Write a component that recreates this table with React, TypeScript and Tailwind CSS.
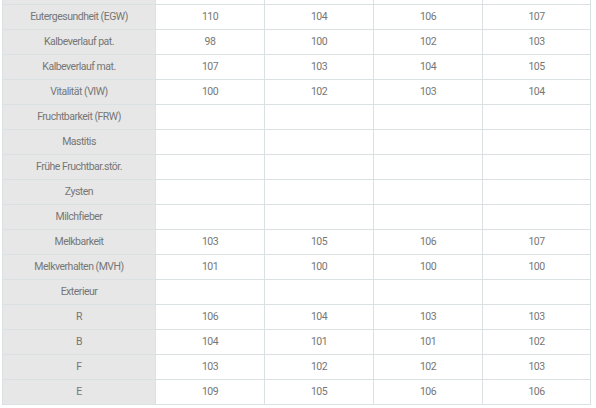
const rows: [string, string[]][] = [
  ["Eutergesundheit (EGW)", ["110", "104", "106", "107"]],
  ["Kalbeverlauf pat.", ["98", "100", "102", "103"]],
  ["Kalbeverlauf mat.", ["107", "103", "104", "105"]],
  ["Vitalität (VIW)", ["100", "102", "103", "104"]],
  ["Fruchtbarkeit (FRW)", ["", "", "", ""]],
  ["Mastitis", ["", "", "", ""]],
  ["Frühe Fruchtbar.stör.", ["", "", "", ""]],
  ["Zysten", ["", "", "", ""]],
  ["Milchfieber", ["", "", "", ""]],
  ["Melkbarkeit", ["103", "105", "106", "107"]],
  ["Melkverhalten (MVH)", ["101", "100", "100", "100"]],
  ["Exterieur", ["", "", "", ""]],
  ["R", ["106", "104", "103", "103"]],
  ["B", ["104", "101", "101", "102"]],
  ["F", ["103", "102", "102", "103"]],
  ["E", ["109", "105", "106", "106"]],
];

export default function App() {
  return (
    <div className="w-[596px] h-[408px] overflow-hidden bg-white pl-[2px] font-['Roboto','Liberation_Sans',sans-serif] text-[10.5px] tracking-[-0.5px] text-[#767676]">
      <table className="-mt-[21px] w-[589px] table-fixed border-collapse">
        <colgroup>
          <col className="w-[153px]" />
          <col className="w-[109px]" />
          <col className="w-[109px]" />
          <col className="w-[109px]" />
          <col />
        </colgroup>
        <tbody>
          <tr className="h-[25px]">
            <td className="border border-[#dbe0e2] bg-[#e7e7e7]"></td>
            <td className="border border-[#dbe0e2]"></td>
            <td className="border border-[#dbe0e2]"></td>
            <td className="border border-[#dbe0e2]"></td>
            <td className="border border-[#dbe0e2]"></td>
          </tr>
          {rows.map(([label, vals]) => (
            <tr key={label} className="h-[25px]">
              <td className="border border-[#dbe0e2] bg-[#e7e7e7] p-0 pt-px text-center leading-none">{label}</td>
              {vals.map((v, i) => (
                <td key={i} className="border border-[#dbe0e2] p-0 pt-px text-center leading-none">
                  {v}
                </td>
              ))}
            </tr>
          ))}
        </tbody>
      </table>
    </div>
  );
}
